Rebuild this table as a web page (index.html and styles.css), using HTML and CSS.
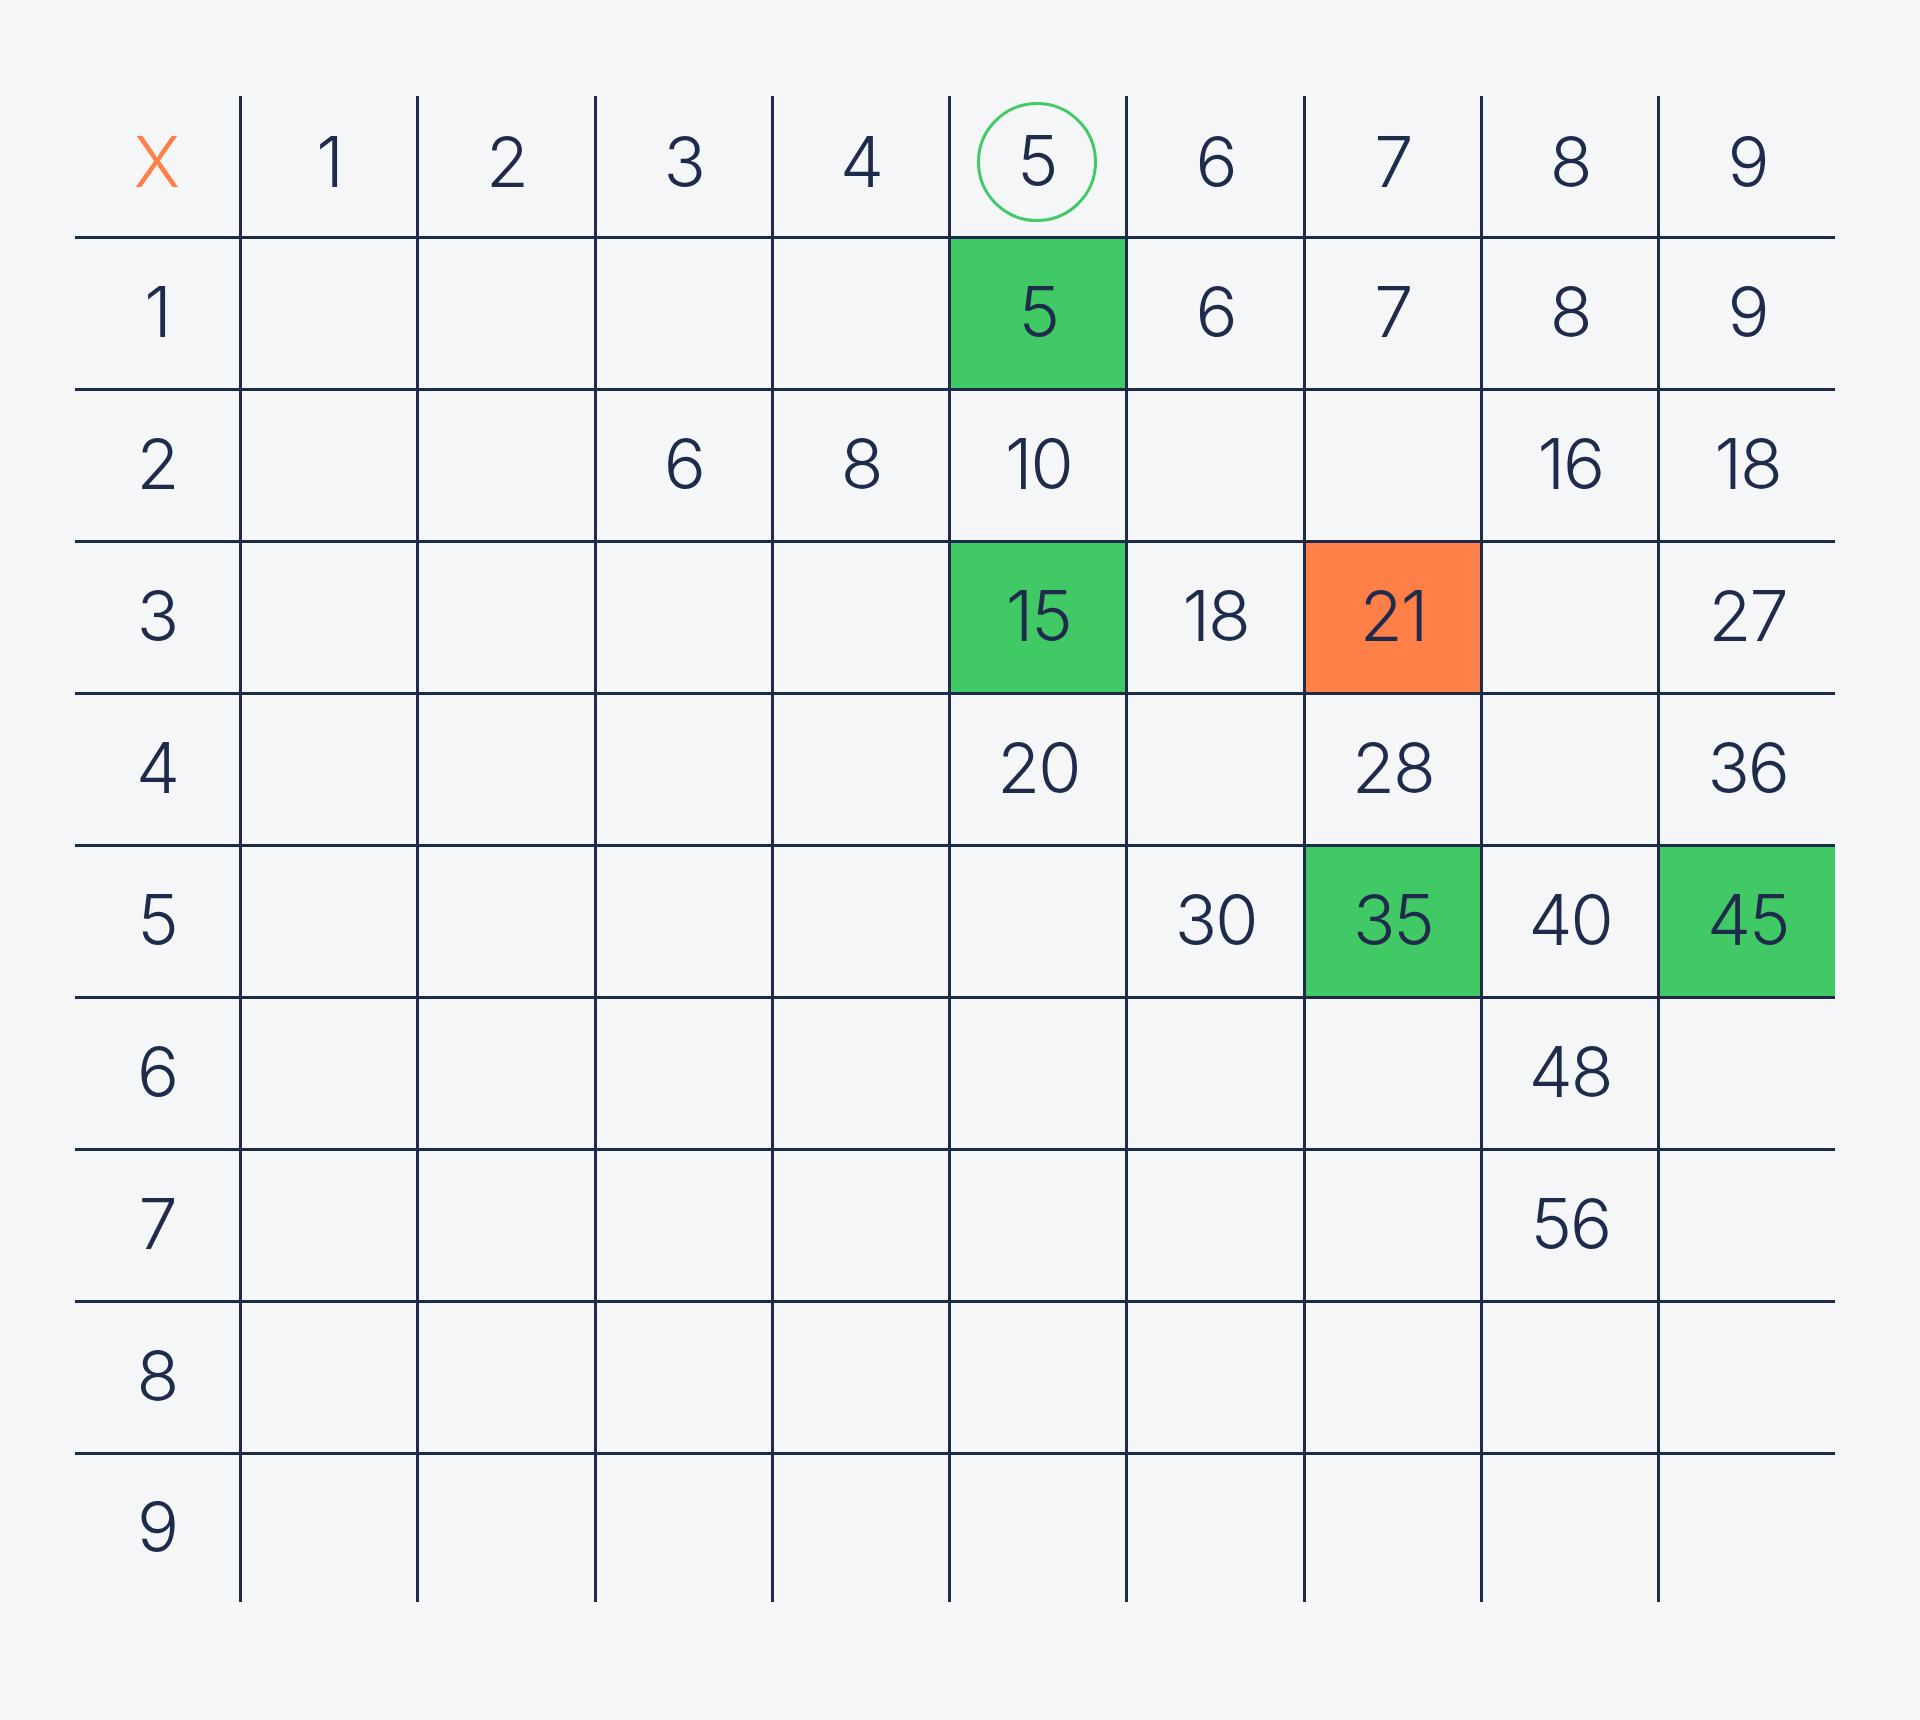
FILE: index.html
```html
<!DOCTYPE html>
<html lang="en">
<head>
<meta charset="utf-8">
<title>Multiplication table</title>
<link rel="stylesheet" href="styles.css">
</head>
<body>
<main class="page">
  <div class="table">
    <div class="cell corner">X</div>
    <div class="cell head">1</div>
    <div class="cell head">2</div>
    <div class="cell head">3</div>
    <div class="cell head">4</div>
    <div class="cell head"><span class="ring">5</span></div>
    <div class="cell head">6</div>
    <div class="cell head">7</div>
    <div class="cell head">8</div>
    <div class="cell head">9</div>

    <div class="cell label">1</div>
    <div class="cell val"></div><div class="cell val"></div><div class="cell val"></div><div class="cell val"></div>
    <div class="cell val green">5</div><div class="cell val">6</div><div class="cell val">7</div><div class="cell val">8</div><div class="cell val">9</div>

    <div class="cell label">2</div>
    <div class="cell val"></div><div class="cell val"></div><div class="cell val">6</div><div class="cell val">8</div>
    <div class="cell val">10</div><div class="cell val"></div><div class="cell val"></div><div class="cell val">16</div><div class="cell val">18</div>

    <div class="cell label">3</div>
    <div class="cell val"></div><div class="cell val"></div><div class="cell val"></div><div class="cell val"></div>
    <div class="cell val green">15</div><div class="cell val">18</div><div class="cell val orange">21</div><div class="cell val"></div><div class="cell val">27</div>

    <div class="cell label">4</div>
    <div class="cell val"></div><div class="cell val"></div><div class="cell val"></div><div class="cell val"></div>
    <div class="cell val">20</div><div class="cell val"></div><div class="cell val">28</div><div class="cell val"></div><div class="cell val">36</div>

    <div class="cell label">5</div>
    <div class="cell val"></div><div class="cell val"></div><div class="cell val"></div><div class="cell val"></div>
    <div class="cell val"></div><div class="cell val">30</div><div class="cell val green">35</div><div class="cell val">40</div><div class="cell val green">45</div>

    <div class="cell label">6</div>
    <div class="cell val"></div><div class="cell val"></div><div class="cell val"></div><div class="cell val"></div>
    <div class="cell val"></div><div class="cell val"></div><div class="cell val"></div><div class="cell val">48</div><div class="cell val"></div>

    <div class="cell label">7</div>
    <div class="cell val"></div><div class="cell val"></div><div class="cell val"></div><div class="cell val"></div>
    <div class="cell val"></div><div class="cell val"></div><div class="cell val"></div><div class="cell val">56</div><div class="cell val"></div>

    <div class="cell label">8</div>
    <div class="cell val"></div><div class="cell val"></div><div class="cell val"></div><div class="cell val"></div>
    <div class="cell val"></div><div class="cell val"></div><div class="cell val"></div><div class="cell val"></div><div class="cell val"></div>

    <div class="cell label">9</div>
    <div class="cell val"></div><div class="cell val"></div><div class="cell val"></div><div class="cell val"></div>
    <div class="cell val"></div><div class="cell val"></div><div class="cell val"></div><div class="cell val"></div><div class="cell val"></div>
  </div>
</main>
</body>
</html>
```
FILE: styles.css
```css
html, body {
  margin: 0;
  padding: 0;
  background: #f4f6f8;
}

.page {
  padding: 96px 85px 117px 75px;
}

.table {
  display: grid;
  grid-template-columns: 164px repeat(8, 177.3px) 177.6px;
  grid-template-rows: 140px repeat(8, 152px) 150px;
  width: 1760px;
  font-family: Inter, "Liberation Sans", sans-serif;
  font-weight: 350;
  font-size: 70px;
  line-height: 1;
  letter-spacing: -2px;
  color: #1e2b4b;
}

.cell {
  box-sizing: border-box;
  display: flex;
  align-items: center;
  justify-content: center;
  padding-bottom: 3px;
}

.corner {
  color: #ff7f48;
  padding-bottom: 9px;
  letter-spacing: 0;
}

.head {
  border-left: 3px solid #1d2a4a;
  padding-bottom: 9px;
}

.label {
  border-top: 3px solid #1d2a4a;
}

.val {
  border-top: 3px solid #1d2a4a;
  border-left: 3px solid #1d2a4a;
}

.green {
  background: #40c965;
}

.orange {
  background: #ff7f48;
}

.ring {
  box-sizing: border-box;
  width: 120px;
  height: 120px;
  border: 3px solid #40c965;
  border-radius: 50%;
  display: flex;
  align-items: center;
  justify-content: center;
  margin-left: -3px;
  padding-bottom: 1px;
}
```
